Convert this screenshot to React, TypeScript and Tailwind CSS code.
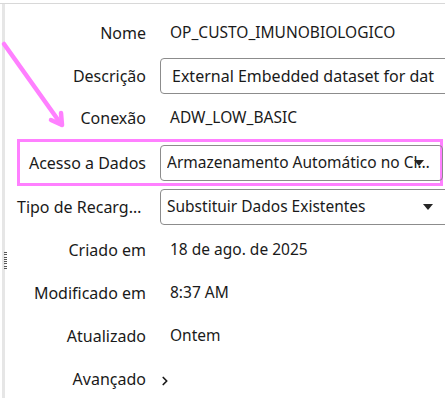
import { ChevronRight } from "lucide-react";

const font = { fontFamily: '"Noto Sans", "Open Sans", sans-serif' };

const Caret = () => (
  <svg width="10" height="6" viewBox="0 0 10 6" className="shrink-0">
    <path d="M0 0 L10 0 L5 6 Z" fill="#262626" />
  </svg>
);

const Label = ({ text, wide = true }: { text: string; wide?: boolean }) => (
  <div
    className={`${wide ? "w-[141px] pl-[12px]" : "w-[126px]"} shrink-0 truncate text-right text-[16px] text-[#1a1a1a]`}
  >
    {text}
  </div>
);

const TextRow = ({ label, value, h }: { label: string; value: string; h: string }) => (
  <div className={`flex items-center ${h}`}>
    <Label text={label} />
    <div className="ml-[24px] text-[#1a1a1a] whitespace-nowrap">{value}</div>
  </div>
);

export default function App() {
  return (
    <div
      className="relative w-[445px] h-[398px] overflow-hidden bg-white text-[15.5px]"
      style={font}
    >
      <div className="mt-[3px] flex h-[395px] border-t border-[#d8d8d8]">
        <div className="ml-[2px] w-[3px] shrink-0 bg-[#e6e6e6]" />
        <div className="flex-1 min-w-0 pt-[7px]">
          <TextRow label="Nome" value="OP_CUSTO_IMUNOBIOLOGICO" h="h-[43px]" />

          <div className="flex items-center h-[43px]">
            <Label text="Descrição" />
            <div className="ml-[14px] h-[36px] w-[300px] shrink-0 flex items-center rounded-[4px] border border-[#8c8c8c] pl-[11px] text-[#1a1a1a]">
              <div className="w-[265px] overflow-hidden whitespace-nowrap text-[16px]">
                External Embedded dataset for dat
              </div>
            </div>
          </div>

          <TextRow label="Conexão" value="ADW_LOW_BASIC" h="h-[42px]" />

          <div className="ml-[12px] flex h-[47px] w-[426px] items-center border-[3px] border-[#ff80ff]">
            <Label text="Acesso a Dados" wide={false} />
            <div className="relative ml-[14px] mr-[-3px] flex h-[36px] min-w-0 flex-1 items-center rounded-[4px] border border-[#8c8c8c] pl-[6px] pr-[4px] text-[#1a1a1a]">
              <span className="truncate">Armazenamento Automático no Cloud</span>
              <div className="absolute right-[18px] top-[14px]">
                <Caret />
              </div>
            </div>
          </div>

          <div className="flex items-center h-[42px]">
            <Label text="Tipo de Recarga de Dados" />
            <div className="ml-[14px] flex h-[36px] w-[290px] shrink-0 items-center rounded-[4px] border border-[#8c8c8c] pl-[6px] text-[#1a1a1a]">
              <span className="flex-1 whitespace-nowrap">Substituir Dados Existentes</span>
              <div className="mr-[16px]">
                <Caret />
              </div>
            </div>
          </div>

          <TextRow label="Criado em" value="18 de ago. de 2025" h="h-[43px]" />
          <TextRow label="Modificado em" value="8:37 AM" h="h-[43px]" />
          <TextRow label="Atualizado" value="Ontem" h="h-[43px]" />

          <div className="flex items-center h-[43px]">
            <Label text="Avançado" />
            <ChevronRight className="ml-[12px] mt-[4px] h-[14px] w-[14px] text-[#1a1a1a]" strokeWidth={3} />
          </div>
        </div>
      </div>

      {/* resize grip */}
      <div className="absolute left-[4px] top-[252px] flex flex-col gap-[1.3px]">
        {[0, 1, 2, 3, 4, 5, 6, 7].map((i) => (
          <div key={i} className="h-[1px] w-[3px] bg-[#555]" />
        ))}
      </div>

      {/* annotation arrow */}
      <svg className="absolute left-0 top-0" width="80" height="140" viewBox="0 0 80 140">
        <g stroke="#ff80ff" strokeWidth="4.5" strokeLinecap="round" strokeLinejoin="round" fill="none">
          <line x1="4" y1="44" x2="61" y2="124" />
          <polyline points="51,120 62,125 61,113" />
        </g>
      </svg>
    </div>
  );
}
